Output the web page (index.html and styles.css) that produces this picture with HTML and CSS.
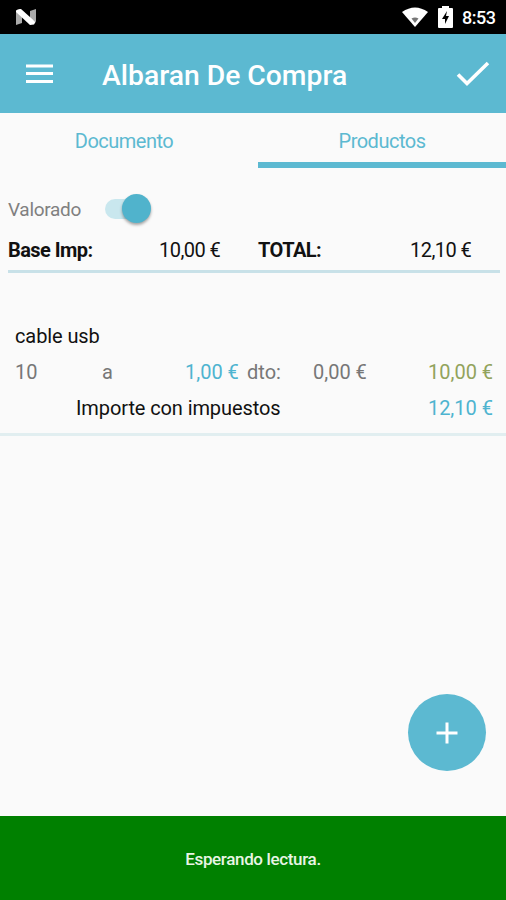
FILE: index.html
```html
<!DOCTYPE html>
<html lang="es">
<head>
<meta charset="utf-8">
<title>Albaran De Compra</title>
<link rel="stylesheet" href="styles.css">
</head>
<body>
<div class="status">
  <svg class="nougat" width="22" height="18" viewBox="0 0 22 18">
    <path fill="#aaa" d="M1 3l6 3v9l-6 2zM21 1v13l-6-3V3z"/>
    <path fill="#fff" d="M1 2.5Q3 .5 6 1l14.5 13-1.5 2.5-4 .5L1 4z"/>
  </svg>
  <svg class="wifi" width="26" height="20" viewBox="0 0 26 20">
    <path fill="#fff" d="M0 5Q13-4 26 5L13 20z"/>
    <path fill="#777" d="M9.5 11.5q3.5-2 7 0L13 16z"/>
  </svg>
  <svg class="battery" width="15" height="22" viewBox="0 0 15 22">
    <path fill="#fff" d="M4 2V0h7v2h3q1 0 1 1v18q0 1-1 1H1q-1 0-1-1V3q0-1 1-1z"/>
    <path fill="#000" d="M9 5l-5 8h3v5l4-8H8z"/>
  </svg>
  <span class="clock">8:53</span>
</div>
<header class="appbar">
  <svg class="menu" width="27" height="20" viewBox="0 0 27 20">
    <path stroke="#fff" stroke-width="3" d="M0 2h27M0 9.5h27M0 17.5h27"/>
  </svg>
  <h1 class="title">Albaran De Compra</h1>
  <svg class="check" width="34" height="26" viewBox="0 0 34 26">
    <path fill="none" stroke="#fff" stroke-width="3.6" d="M2 13.5l9 9L32 2"/>
  </svg>
</header>
<nav class="tabs">
  <span class="tab">Documento</span>
  <span class="tab active">Productos</span>
</nav>
<section class="summary">
  <div class="valued"><span class="valued-label">Valorado</span><span class="switch"><span class="thumb"></span></span></div>
  <div class="totals">
    <b class="base">Base Imp:</b><span>10,00 €</span>
    <b class="total">TOTAL:</b><span>12,10 €</span>
  </div>
</section>
<main class="list">
  <article class="item">
    <div class="name">cable usb</div>
    <div class="line">
      <span>10</span><span>a</span><span class="blue">1,00 €</span><span>dto:</span><span>0,00 €</span><span class="amount">10,00 €</span>
    </div>
    <div class="taxed"><span class="taxed-label">Importe con impuestos</span><span class="blue">12,10 €</span></div>
  </article>
  <div class="fab">
    <svg width="22" height="22" viewBox="0 0 22 22"><path stroke="#fff" stroke-width="3" d="M11 0.5v21M0.5 11h21"/></svg>
  </div>
</main>
<footer class="message"><span>Esperando lectura.</span></footer>
</body>
</html>
```
FILE: styles.css
```css
* { box-sizing: border-box; }
body {
  margin: 0;
  height: 900px;
  display: flex;
  flex-direction: column;
  overflow: hidden;
  background: #fafafa;
  color: #111;
  font: 20px/24px Roboto, "Liberation Sans", sans-serif;
}
svg { display: block; flex: none; }
.status {
  height: 34px;
  flex: none;
  display: flex;
  align-items: center;
  padding: 0 11px 0 15px;
  background: #000;
  color: #fff;
}
.wifi { margin-left: auto; margin-right: 10px; }
.battery { margin-right: 9px; margin-bottom: 1px; }
.clock { width: 33px; font-size: 18px; font-weight: 500; letter-spacing: -0.5px; margin-top: 2px; white-space: nowrap; }
.appbar {
  height: 79px;
  flex: none;
  display: flex;
  align-items: center;
  padding: 0 16px 0 26px;
  background: #5cb9d1;
  color: #fff;
}
.title { margin: 4px 0 0 49px; font-size: 28.3px; line-height: 32px; font-weight: 500; white-space: nowrap; }
.check { margin-left: auto; }
.tabs {
  height: 56px;
  flex: none;
  display: flex;
  justify-content: space-between;
  color: #5cb9d1;
  letter-spacing: -0.5px;
  text-align: center;
}
.tab { width: 248px; padding-top: 16px; }
.tab.active { height: 55px; border-bottom: 6px solid #5cb9d1; letter-spacing: -0.6px; }
.tab.active { letter-spacing: -0.5px; }
.summary {
  height: 104px;
  flex: none;
  margin: 0 6px 0 8px;
  padding-top: 25px;
  border-bottom: 3px solid #c8e1e8;
}
.valued { display: flex; align-items: center; height: 30px; color: #808080; }
.valued-label { width: 97px; padding-top: 1px; font-size: 19px; letter-spacing: -0.3px; }
.switch { width: 44px; height: 20px; border-radius: 10px; background: #c9e7ee; }
.thumb {
  display: block;
  width: 29px;
  height: 29px;
  margin: -5px 0 0 17px;
  border-radius: 50%;
  background: #50b3cc;
  box-shadow: 0 2px 3px rgba(0, 0, 0, .35);
}
.totals { display: grid; grid-template-columns: 151px 99px 152px 1fr; margin-top: 14px; letter-spacing: -0.55px; }
.list { position: relative; flex: 1; }
.item { height: 163px; padding: 51px 13px 0 15px; border-bottom: 3px solid #e1eef0; }
.name, .taxed-label { letter-spacing: -0.1px; }
.line { display: grid; grid-template-columns: 87px 83px 62px 66px 115px 1fr; margin-top: 12px; color: #777; white-space: nowrap; }
.blue { color: #4eb4d0; }
.amount { color: #92a35c; }
.taxed { display: flex; justify-content: space-between; margin: 12px 0 0 61px; }
.fab {
  position: absolute;
  right: 20px;
  bottom: 45px;
  width: 78px;
  height: 77px;
  border-radius: 50%;
  display: flex;
  align-items: center;
  justify-content: center;
  background: #5cb9d1;
}
.message {
  height: 84px;
  flex: none;
  display: flex;
  align-items: center;
  justify-content: center;
  padding-top: 2px;
  background: #008000;
  color: #e8f5e4;
  font-size: 17px;
  letter-spacing: -0.35px;
  font-weight: 500;
}
```
